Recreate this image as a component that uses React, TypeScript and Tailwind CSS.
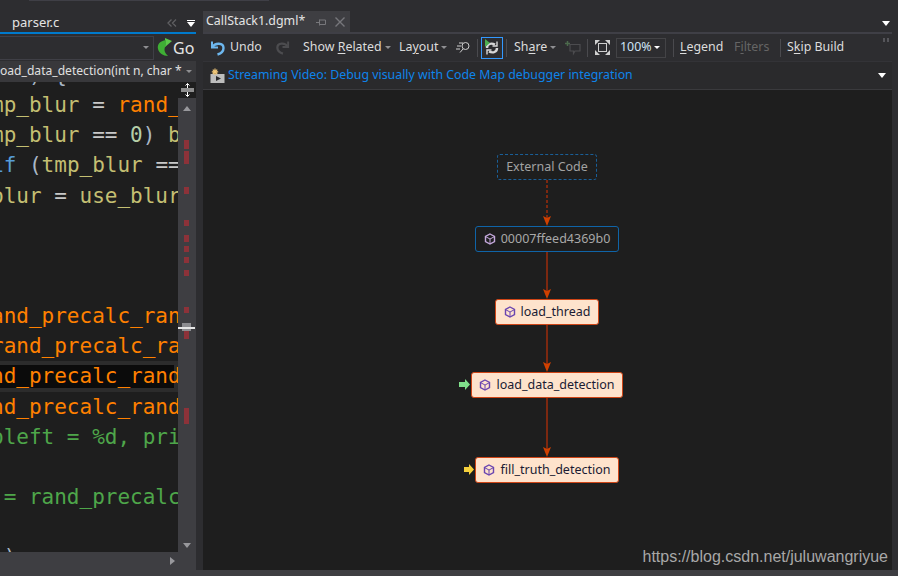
const Y = "#c4bf72";
const W = "#c8c8c8";
const O = "#ff8000";
const G = "#4ea64a";
const B = "#569cd6";
const N = "#b5cea8";
const P = "#a9b7c6";

const codeLines: [string, string][][] = [
  [["   ) {", P]],
  [["mp_blur", Y], [" = ", W], ["rand_", O]],
  [["mp_blur", Y], [" == ", W], ["0", N], [")", P], [" b", Y]],
  [["if", B], [" (", P], ["tmp_blur", Y], [" ==", W]],
  [["blur", Y], [" = ", W], ["use_blur", Y]],
  [],
  [],
  [],
  [["and_precalc_ran", O]],
  [["rand_precalc_ra", O]],
  [["nd_precalc_rand", O]],
  [["nd_precalc_rand", O]],
  [["pleft = %d, pri", G]],
  [],
  [[" = rand_precalc", G]],
  [],
  [[" )", P]],
];

const marks = [
  [140, 9], [151, 13], [187, 7], [220, 6], [235, 7], [246, 6], [257, 6], [270, 6],
  [307, 6], [331, 8], [408, 16],
];

const Caret = ({ className = "" }: { className?: string }) => (
  <span className={`inline-block w-0 h-0 border-x-[3px] border-x-transparent border-t-[3px] border-t-[#8f8f92] ${className}`} />
);

const WhiteCaret = ({ className = "" }: { className?: string }) => (
  <span className={`inline-block w-0 h-0 border-x-[4px] border-x-transparent border-t-[5px] border-t-white ${className}`} />
);

const Sep = ({ ml, mr }: { ml: string; mr: string }) => (
  <span className={`w-px h-[18px] bg-[#4a4a4e] ${ml} ${mr}`} />
);

const Cube = ({ color }: { color: string }) => (
  <svg width="12" height="12" viewBox="0 0 12 12" fill="none" stroke={color} strokeWidth="1.4" className="shrink-0">
    <path d="M6 1 L10.5 3.4 V8.6 L6 11 L1.5 8.6 V3.4 Z" />
    <path d="M1.5 3.6 L6 6 L10.5 3.6 M6 6 V11" strokeWidth="1" />
  </svg>
);

const NodeBox = ({
  left,
  top,
  width,
  dark,
  dotted,
  label,
}: {
  left: string;
  top: string;
  width: string;
  dark?: boolean;
  dotted?: boolean;
  label: string;
}) => (
  <div
    className={`absolute h-[26px] flex items-center justify-center gap-[5px] rounded-[3px] text-[12.5px] ${left} ${top} ${width} ${
      dotted
        ? "border border-dashed border-[#1a5f98] text-[#a2a2a2]"
        : dark
        ? "border border-[#0f64a8] text-[#a8a8a8]"
        : "border border-[#cf4516] bg-[#fee3cc] text-[#1b1b33]"
    }`}
  >
    {!dotted && <Cube color={dark ? "#c4a8dc" : "#6a45b0"} />}
    <span className="pt-px">{label}</span>
  </div>
);

const Edge = ({ y1, y2, dashed }: { y1: number; y2: number; dashed?: boolean }) => (
  <>
    <line x1="344" y1={y1} x2="344" y2={y2 - 8} stroke="#7c2810" strokeWidth="2" strokeDasharray={dashed ? "3 2" : undefined} />
    <path d={`M340 ${y2 - 10} L344 ${y2 - 8} L348 ${y2 - 10} L344 ${y2} Z`} fill="#d04000" />
  </>
);

const Toolbar = () => (
  <div className="h-[27px] shrink-0 flex items-center bg-[#2d2d30] text-[12.4px] text-[#dcdcdc]">
    <svg width="16" height="16" viewBox="0 0 16 16" fill="none" stroke="#6db7ee" strokeWidth="2.4" className="ml-[7px]">
      <path d="M2 1.5 V7.5 H8" strokeWidth="2" />
      <path d="M2.5 7 C5 2.5 13.5 2.5 13.5 8 C13.5 11 11 13.5 7.5 14.5" />
    </svg>
    <span className="ml-[4px] w-[45px]">Undo</span>
    <svg width="15" height="15" viewBox="0 0 16 16" fill="none" stroke="#4c4c4f" strokeWidth="2.4">
      <path d="M14 1.5 V7.5 H8" strokeWidth="2" />
      <path d="M13.5 7 C11 2.5 2.5 2.5 2.5 8 C2.5 11 5 13.5 8.5 14.5" />
    </svg>
    <span className="ml-[13px] w-[80px] whitespace-nowrap">
      Show <span className="underline underline-offset-2">R</span>elated
    </span>
    <Caret className="ml-[2px]" />
    <span className="ml-[8px] w-[40px] whitespace-nowrap">
      La<span className="underline underline-offset-2">y</span>out
    </span>
    <Caret className="ml-[2px]" />
    <svg width="16" height="14" viewBox="0 0 16 14" fill="none" stroke="#cfcfcf" strokeWidth="1" className="ml-[8px]">
      <circle cx="10.5" cy="5" r="3.5" />
      <path d="M8 8 L5 11.5 M4 2 H8 M2 5 H6 M1 8 H5 " />
    </svg>
    <Sep ml="ml-[6px]" mr="mr-[3px]" />
    <span className="w-[22px] h-[22px] border border-[#3399ff] flex items-center justify-center relative">
      <svg width="16" height="16" viewBox="0 0 16 16" fill="none" stroke="#d8d8d8" strokeWidth="2.4">
        <path d="M3 8 C3 4 7 2.5 11 4.5 M13 8 C13 12 9 13.5 5 11.5" />
        <path d="M13 1.5 V6 H8.5 M3 14.5 V10 H7.5" strokeWidth="1.4" />
      </svg>
      <span className="absolute left-[3px] top-[1px] w-0 h-0 border-y-[4px] border-y-transparent border-l-[5px] border-l-[#4caf50]" />
    </span>
    <Sep ml="ml-[3px]" mr="mr-[7px]" />
    <span className="w-[34px] whitespace-nowrap">
      Sh<span className="underline underline-offset-2">a</span>re
    </span>
    <Caret className="ml-[2px]" />
    <svg width="16" height="16" viewBox="0 0 16 16" fill="none" stroke="#4c4c4f" strokeWidth="1.2" className="ml-[9px]">
      <path d="M5 4.5 H15 V11 H10 L8.5 13.5 V11 H5 Z" />
      <path d="M2.5 1 V6 M0 3.5 H5" stroke="#4c6a4c" strokeWidth="1.5" />
    </svg>
    <Sep ml="ml-[6px]" mr="mr-[7px]" />
    <svg width="15" height="15" viewBox="0 0 15 15" fill="none" stroke="#cfcfcf">
      <rect x="3.5" y="3.5" width="8" height="8" strokeWidth="1" />
      <path d="M0 0 H5 L0 5 Z M15 0 V5 L10 0 Z M0 15 V10 L5 15 Z M15 15 H10 L15 10 Z" fill="#cfcfcf" stroke="none" />
    </svg>
    <span className="ml-[6px] w-[50px] h-[20px] border border-[#434346] flex items-center justify-between pl-[3px] pr-[5px] text-[#cfe3f5]">
      100%
      <WhiteCaret className="border-x-[3px]! border-t-[3px]!" />
    </span>
    <Sep ml="ml-[7px]" mr="mr-[6px]" />
    <span className="w-[54px] whitespace-nowrap">
      <span className="underline underline-offset-2">L</span>egend
    </span>
    <span className="w-[46px] whitespace-nowrap text-[#656565]">
      F<span className="underline underline-offset-2">i</span>lters
    </span>
    <Sep ml="ml-0" mr="mr-[6px]" />
    <span className="whitespace-nowrap">
      S<span className="underline underline-offset-2">k</span>ip Build
    </span>
    <span className="ml-auto mr-[3px] mb-[16px] flex gap-[2px]">
      <span className="w-[2px] h-[4px] bg-[#55555a]" />
      <span className="w-[2px] h-[4px] bg-[#55555a]" />
    </span>
  </div>
);

const App = () => (
  <div className="w-[898px] h-[576px] flex flex-col bg-[#2d2d30] overflow-hidden font-['Noto_Sans','Liberation_Sans',sans-serif]">
    <div className="h-[570px] flex shrink-0">
      <div className="w-[196px] shrink-0 flex flex-col">
        <div className="h-[32px] shrink-0 flex items-center text-[13px] text-[#e4e4e4] relative">
          <span className="absolute top-0 left-[29px] w-[240px] h-px bg-[#3f3f46]" />
          <span className="ml-[12px] mt-[14px]">parser.c</span>
          <svg width="10" height="8" viewBox="0 0 10 8" fill="none" stroke="#5f5f62" strokeWidth="1.3" className="ml-auto mt-[14px]">
            <path d="M4.5 0.5 L1 4 L4.5 7.5 M9 0.5 L5.5 4 L9 7.5" />
          </svg>
          <span className="ml-[10px] mr-[1px] mt-[14px] flex flex-col items-center gap-px">
            <span className="w-[8px] h-px bg-white" />
            <WhiteCaret />
          </span>
        </div>
        <div className="h-[2px] shrink-0 bg-[#007acc]" />
        <div className="h-[27px] shrink-0 flex items-center">
          <div className="w-[155px] h-[24px] border border-[#3f3f46] -ml-px flex items-center justify-end pr-[4px]">
            <Caret className="border-t-[#7c7c80]" />
          </div>
          <svg width="16" height="20" viewBox="0 0 16 20" className="ml-[3px]">
            <path d="M8 0 L15 3 L8 9 Z" fill="#5cc84a" />
            <path d="M9 2 C3 3 0 6 1 11 C2 15 6 18 11 18 C8 15 6 12 9 7 Z" fill="#3fae35" />
          </svg>
          <span className="text-[16px] text-[#e4e4e4] leading-none">Go</span>
        </div>
        <div className="h-[21px] shrink-0 bg-[#38383b] flex items-center pr-[4px] text-[12.1px] text-[#e0e0e0] overflow-hidden whitespace-nowrap">
          <span className="flex-1 overflow-hidden">oad_data_detection(int n, char *'</span>
          <Caret className="border-t-[#8a8a8e] ml-[4px]" />
        </div>
        <div className="flex-1 min-h-0 flex">
          <div className="w-[178px] shrink-0 bg-[#1e1e1e] overflow-hidden">
            <div className="-mt-[22px] -ml-[9px] font-['DejaVu_Sans_Mono',monospace] text-[21px] leading-[30.15px] whitespace-pre">
              {codeLines.map((line, i) => (
                <div key={i} className={`h-[30.15px] relative ${i === 10 ? "bg-[#2c2c2c]" : ""}`}>
                  {i === 10 && <span className="absolute inset-y-[4px] left-0 right-[4px] bg-[#0b0b0b]" />}
                  <span className="relative">
                    {line.map(([text, color], j) => (
                      <span key={j} style={{ color }}>
                        {text}
                      </span>
                    ))}
                  </span>
                </div>
              ))}
            </div>
          </div>
          <div className="w-[18px] shrink-0 bg-[#3e3e42] relative">
            <div className="h-[16px] bg-[#1e1e1e] flex items-center justify-center">
              <svg width="13" height="14" viewBox="0 0 13 14" fill="none" stroke="white" strokeWidth="1">
                <path d="M0 6 H13 M0 8 H13 M6.5 0.5 V5 M6.5 9 V13.5 M4.5 2.5 L6.5 0.5 L8.5 2.5 M4.5 11.5 L6.5 13.5 L8.5 11.5" />
              </svg>
            </div>
            <span className="absolute left-[5px] top-[24px] w-0 h-0 border-x-[4px] border-x-transparent border-b-[5px] border-b-[#98989c]" />
            {marks.map(([top, height]) => (
              <span
                key={top}
                className="absolute left-[6px] w-[5px] bg-[#8c3239]"
                style={{ top: top - 82, height }}
              />
            ))}
            <span className="absolute left-[4px] top-[241px] w-[9px] h-[8px] bg-[#8c8c90]" />
            <span className="absolute left-0 top-[245px] w-[17px] h-[2px] bg-[#e6e6e6]" />
            <span className="absolute left-[5px] bottom-[4px] w-0 h-0 border-x-[4px] border-x-transparent border-t-[5px] border-t-[#98989c]" />
          </div>
        </div>
        <div className="h-[18px] shrink-0 bg-[#3e3e42] flex items-center justify-end pr-[21px]">
          <span className="w-0 h-0 border-y-[4px] border-y-transparent border-l-[5px] border-l-[#98989c]" />
        </div>
      </div>

      <div className="w-[7px] shrink-0" />

      <div className="w-[689px] shrink-0 flex flex-col">
        <div className="h-[32px] shrink-0 flex items-end relative">
          <div className="w-[147px] h-[21px] bg-[#3e3e42] flex items-center pl-[3px] text-[12.4px] text-[#e4e4e4]">
            <span className="whitespace-nowrap">CallStack1.dgml*</span>
            <svg width="10" height="10" viewBox="0 0 10 10" fill="none" stroke="#77777b" className="ml-[11px]">
              <path d="M0 5.5 H3 M3.5 2.5 V8.5 M3.5 3 H9.5 V7.5 H3.5" />
            </svg>
            <svg width="10" height="10" viewBox="0 0 10 10" fill="none" stroke="#77777b" strokeWidth="1.4" className="ml-[9px]">
              <path d="M0.5 0.5 L9.5 9.5 M9.5 0.5 L0.5 9.5" />
            </svg>
          </div>
          <WhiteCaret className="absolute right-[2px] top-[21px]" />
        </div>
        <div className="h-[2px] shrink-0 bg-[#3f3f46]" />
        <Toolbar />
        <div className="h-[29px] shrink-0 flex items-center bg-[#2a2a2c] border-t border-[#333337] border-b border-b-[#3a3a3d] pl-[7px] pr-[6px] text-[12.35px] text-[#0e84ea]">
          <svg width="16" height="16" viewBox="0 0 16 16" className="shrink-0">
            <rect x="0.5" y="6" width="14" height="9" fill="#bdbdbd" />
            <path d="M6 8 L11 10.5 L6 13 Z" fill="#2a2a2c" />
            <path d="M5 0.5 V7 M1.8 3.8 H8.2 M2.8 1.6 L7.2 6 M7.2 1.6 L2.8 6" stroke="#f2c879" strokeWidth="1.2" />
          </svg>
          <span className="ml-[2px] whitespace-nowrap">Streaming Video: Debug visually with Code Map debugger integration</span>
          <WhiteCaret className="ml-auto" />
        </div>
        <div className="flex-1 min-h-0 bg-[#1e1e1e] relative">
          <svg width="689" height="480" className="absolute inset-0">
            <g transform="translate(0,-90)">
              <Edge y1={180} y2={226} dashed />
              <Edge y1={252} y2={299} />
              <Edge y1={325} y2={372} />
              <Edge y1={398} y2={457} />
            </g>
            <path d="M256 292 H262 V289 L267 294.5 L262 300 V297 H256 Z" fill="#7fe08a" />
            <path d="M261 377 H266 V374 L271 379.5 L266 385 V382 H261 Z" fill="#f5d03c" />
          </svg>
          <NodeBox left="left-[294px]" top="top-[64px]" width="w-[100px]" dotted label="External Code" />
          <NodeBox left="left-[272px]" top="top-[136px]" width="w-[144px]" dark label="00007ffeed4369b0" />
          <NodeBox left="left-[292px]" top="top-[209px]" width="w-[104px]" label="load_thread" />
          <NodeBox left="left-[268px]" top="top-[282px]" width="w-[152px]" label="load_data_detection" />
          <NodeBox left="left-[272px]" top="top-[367px]" width="w-[144px]" label="fill_truth_detection" />
          <span className="absolute right-[4px] bottom-[1px] font-['Liberation_Sans',sans-serif] text-[16px] text-[#a8a8a8]">
            https://blog.csdn.net/juluwangriyue
          </span>
        </div>
      </div>
    </div>
    <div className="flex-1 bg-[#3e3e42]" />
  </div>
);

export default App;
